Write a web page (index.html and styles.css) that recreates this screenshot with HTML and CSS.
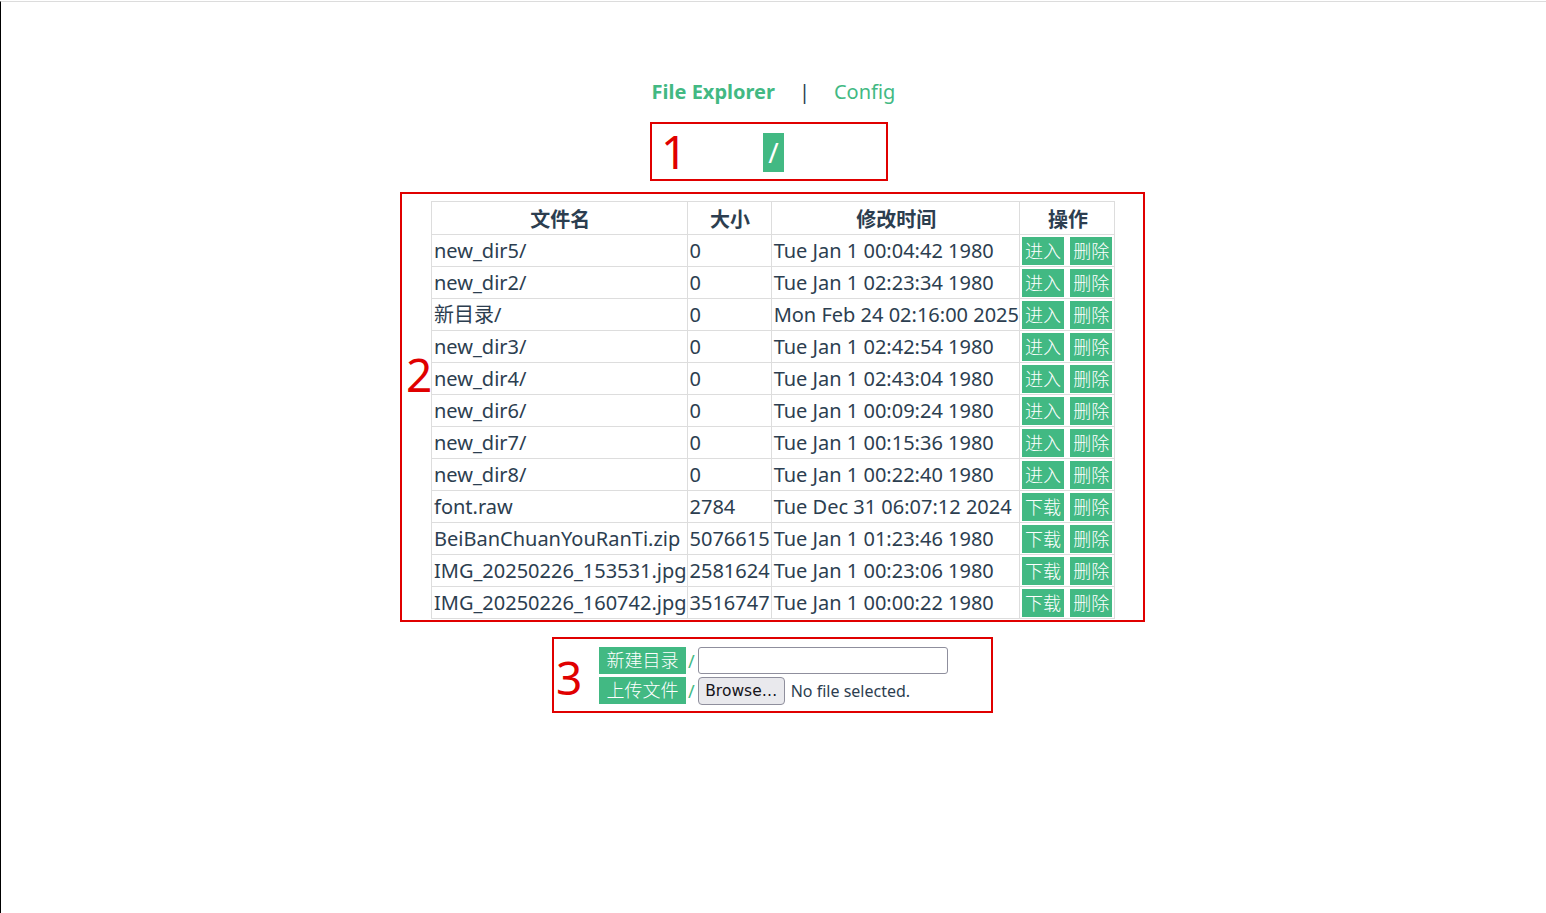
FILE: index.html
```html
<!DOCTYPE html>
<html>
<head>
<meta charset="utf-8">
<link rel="stylesheet" href="styles.css">
</head>
<body>
<div class="frame">
  <nav class="nav">
    <a class="nav-link active">File Explorer</a>
    <span class="nav-sep">|</span>
    <a class="nav-link">Config</a>
  </nav>

  <div class="mark-box box-path">
    <span class="mark mark-1">1</span>
    <span class="path-seg">/</span>
  </div>

  <div class="mark-box box-table">
    <span class="mark mark-2">2</span>
    <table class="files">
      <thead>
        <tr><th>文件名</th><th>大小</th><th>修改时间</th><th>操作</th></tr>
      </thead>
      <tbody>
        <tr><td>new_dir5/</td><td class="size">0</td><td>Tue Jan 1 00:04:42 1980</td><td class="ops"><span class="btn">进入</span> <span class="btn">删除</span></td></tr>
        <tr><td>new_dir2/</td><td class="size">0</td><td>Tue Jan 1 02:23:34 1980</td><td class="ops"><span class="btn">进入</span> <span class="btn">删除</span></td></tr>
        <tr><td>新目录/</td><td class="size">0</td><td>Mon Feb 24 02:16:00 2025</td><td class="ops"><span class="btn">进入</span> <span class="btn">删除</span></td></tr>
        <tr><td>new_dir3/</td><td class="size">0</td><td>Tue Jan 1 02:42:54 1980</td><td class="ops"><span class="btn">进入</span> <span class="btn">删除</span></td></tr>
        <tr><td>new_dir4/</td><td class="size">0</td><td>Tue Jan 1 02:43:04 1980</td><td class="ops"><span class="btn">进入</span> <span class="btn">删除</span></td></tr>
        <tr><td>new_dir6/</td><td class="size">0</td><td>Tue Jan 1 00:09:24 1980</td><td class="ops"><span class="btn">进入</span> <span class="btn">删除</span></td></tr>
        <tr><td>new_dir7/</td><td class="size">0</td><td>Tue Jan 1 00:15:36 1980</td><td class="ops"><span class="btn">进入</span> <span class="btn">删除</span></td></tr>
        <tr><td>new_dir8/</td><td class="size">0</td><td>Tue Jan 1 00:22:40 1980</td><td class="ops"><span class="btn">进入</span> <span class="btn">删除</span></td></tr>
        <tr><td>font.raw</td><td class="size">2784</td><td>Tue Dec 31 06:07:12 2024</td><td class="ops"><span class="btn">下载</span> <span class="btn">删除</span></td></tr>
        <tr><td>BeiBanChuanYouRanTi.zip</td><td class="size">5076615</td><td>Tue Jan 1 01:23:46 1980</td><td class="ops"><span class="btn">下载</span> <span class="btn">删除</span></td></tr>
        <tr><td>IMG_20250226_153531.jpg</td><td class="size">2581624</td><td>Tue Jan 1 00:23:06 1980</td><td class="ops"><span class="btn">下载</span> <span class="btn">删除</span></td></tr>
        <tr><td>IMG_20250226_160742.jpg</td><td class="size">3516747</td><td>Tue Jan 1 00:00:22 1980</td><td class="ops"><span class="btn">下载</span> <span class="btn">删除</span></td></tr>
      </tbody>
    </table>
  </div>

  <div class="mark-box box-form">
    <span class="mark mark-3">3</span>
    <div class="form">
      <div class="form-row">
        <span class="btn btn-wide">新建目录</span>
        <span class="slash">/</span>
        <input class="text-input" type="text">
      </div>
      <div class="form-row">
        <span class="btn btn-wide">上传文件</span>
        <span class="slash">/</span>
        <span class="file-btn">Browse…</span>
        <span class="file-status">No file selected.</span>
      </div>
    </div>
  </div>
</div>
</body>
</html>
```

FILE: styles.css
```css
html, body {
  margin: 0;
  padding: 0;
  background: #fff;
}

body {
  font-family: "Noto Sans", "Open Sans", "Noto Sans CJK SC", sans-serif;
  color: #2c3e50;
}

.frame {
  box-sizing: border-box;
  width: 1546px;
  height: 913px;
  border-top: 1px solid #dcdcdc;
  border-left: 1px solid #000;
  border-bottom: 1px solid #000;
  margin-top: 1px;
  padding-top: 76px;
  overflow: hidden;
}

.nav {
  display: flex;
  justify-content: center;
  align-items: center;
  gap: 24px;
  font-size: 20px;
  line-height: 28px;
}

.nav-link {
  color: #42b983;
  text-decoration: none;
}

.nav-link.active {
  font-weight: 700;
}

.nav-sep {
  color: #2c3e50;
}

.mark-box {
  position: relative;
  box-sizing: border-box;
  border: 2px solid #e00000;
}

.mark {
  position: absolute;
  color: #e00000;
  font-family: "Noto Sans", sans-serif;
  font-size: 46px;
  line-height: 50px;
}

.mark-1 {
  left: 9px;
  top: 2px;
}

.box-path {
  width: 238px;
  height: 59px;
  margin: 16px 0 0 649px;
  padding: 9px 0 0 111px;
}

.path-seg {
  display: inline-block;
  background: #42b983;
  color: #fff;
  font-size: 28px;
  line-height: 39px;
  width: 21px;
  text-align: center;
}

.box-table {
  width: 745px;
  margin: 11px 0 0 399px;
  padding: 7px 0 1px 29px;
}

.mark-2 {
  left: 4px;
  top: 155px;
}

.files {
  border-collapse: collapse;
  font-size: 20px;
  line-height: 31px;
}

.files th,
.files td {
  border: 1px solid #dddddd;
  padding: 0 0 0 2px;
  text-align: left;
  white-space: nowrap;
  height: 31px;
  box-sizing: border-box;
}

.files td.size {
  padding-right: 1px;
}

.files th {
  text-align: center;
  font-weight: 700;
  line-height: 29px;
  height: 32px;
  padding-top: 3px;
}

.files td.ops {
  line-height: 0;
  padding: 2px 2px 1px 2px;
  vertical-align: top;
}

.btn {
  display: inline-block;
  background: #42b983;
  color: #fff;
  font-size: 18px;
  line-height: 28px;
  font-weight: 300;
  vertical-align: top;
}

.ops .btn {
  width: 42px;
  text-align: center;
}

.ops .btn + .btn {
  margin-left: 1px;
}

.box-form {
  width: 441px;
  height: 76px;
  margin: 15px 0 0 551px;
  padding: 8px 0 0 45px;
}

.mark-3 {
  left: 2px;
  top: 13px;
}

.form {
  display: flex;
  flex-direction: column;
  gap: 3px;
}

.form-row {
  display: flex;
  align-items: center;
  height: 27px;
}

.btn-wide {
  width: 87px;
  text-align: center;
  line-height: 27px;
}

.slash {
  color: #42b983;
  font-size: 18px;
  margin: 0 3px 0 2px;
}

.text-input {
  box-sizing: border-box;
  width: 250px;
  height: 27px;
  border: 1px solid #8f8f9d;
  border-radius: 3px;
  padding: 0 4px;
  margin: 0;
}

.file-btn {
  box-sizing: border-box;
  display: inline-block;
  width: 87px;
  height: 28px;
  line-height: 26px;
  text-align: center;
  background: #e9e9ed;
  border: 1px solid #8f8f9d;
  border-radius: 4px;
  font-family: "DejaVu Sans", sans-serif;
  font-size: 15.5px;
  color: #15141a;
}

.file-status {
  margin-left: 6px;
  font-size: 16px;
  color: #2c3e50;
}
```
